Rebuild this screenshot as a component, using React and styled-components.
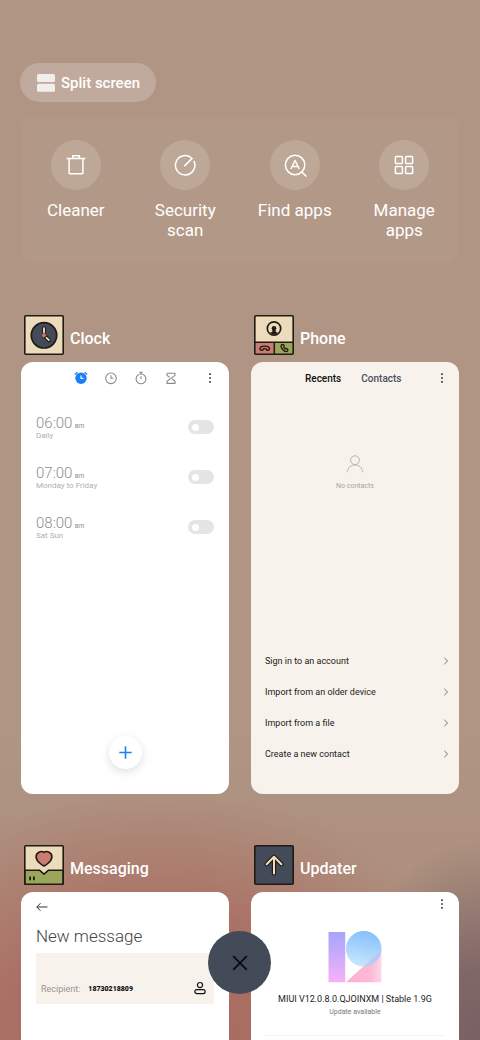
import React from "react";
import styled, { createGlobalStyle } from "styled-components";

const ALARMS = [
  { time: "06:00", days: "Daily" },
  { time: "07:00", days: "Monday to Friday" },
  { time: "08:00", days: "Sat Sun" },
];

const CONTACT_ACTIONS = [
  "Sign in to an account",
  "Import from an older device",
  "Import from a file",
  "Create a new contact",
];

const Dots = () => (
  <svg width="8" height="14" viewBox="0 0 8 14" fill="#111" aria-hidden="true">
    <rect x="3.2" y="2.3" width="1.6" height="1.6" rx="0.4" />
    <rect x="3.2" y="6.2" width="1.6" height="1.6" rx="0.4" />
    <rect x="3.2" y="10.1" width="1.6" height="1.6" rx="0.4" />
  </svg>
);

const TrashIcon = () => (
  <svg width="26" height="26" viewBox="0 0 26 26" fill="none" stroke="#fff" strokeWidth="1.5">
    <path d="M3.6 6.6h18.8M9.8 6.4V3.8h6.6v2.6M6.1 6.6v14.2c0 .6.3.9.9.9h12c.6 0 .9-.3.9-.9V6.6" />
  </svg>
);

const ScanIcon = () => (
  <svg width="26" height="26" viewBox="0 0 26 26" fill="none" stroke="#fff" strokeWidth="1.5" strokeLinecap="round">
    <path d="M12.8 13.6 20.1 6.4A9.7 9.7 0 1 0 22.1 9.4" />
  </svg>
);

const FindIcon = () => (
  <svg width="26" height="26" viewBox="0 0 26 26" fill="none" stroke="#fff" strokeWidth="1.5" strokeLinejoin="round">
    <circle cx="13.1" cy="13" r="9.7" />
    <path d="m19.2 19.3 5.2 5.2M8.9 17 13.1 8.5 17.3 17M10.5 14.6h5.2" />
  </svg>
);

const GridIcon = () => (
  <svg width="26" height="26" viewBox="0 0 26 26" fill="none" stroke="#fff" strokeWidth="1.5">
    <rect x="4.4" y="4.5" width="7" height="7" rx="0.8" />
    <rect x="14.6" y="4.5" width="7" height="7" rx="0.8" />
    <rect x="4.4" y="14.6" width="7" height="7" rx="0.8" />
    <rect x="14.6" y="14.6" width="7" height="7" rx="0.8" />
  </svg>
);

const SHORTCUTS = [
  { label: "Cleaner", icon: <TrashIcon /> },
  { label: "Security scan", icon: <ScanIcon /> },
  { label: "Find apps", icon: <FindIcon /> },
  { label: "Manage apps", icon: <GridIcon /> },
];

const ClockLogo = () => (
  <svg width="40" height="40" viewBox="0 0 40 40">
    <rect x="0.8" y="0.8" width="38.4" height="38.4" rx="1" fill="#ecdcbc" stroke="#211a15" strokeWidth="1.6" />
    <circle cx="20" cy="20.3" r="12.7" fill="#434b59" stroke="#211a15" strokeWidth="1.7" />
    <g strokeLinecap="round">
      <path d="M20 20V13.2M20 20.3 25 25.3" stroke="#211a15" strokeWidth="4" />
      <path d="M20 20V13.2M22.6 22.9 24.9 25.1" stroke="#ecdcbc" strokeWidth="1.9" />
    </g>
    <circle cx="20" cy="20.3" r="2.2" fill="#c97b74" stroke="#211a15" strokeWidth="0.4" />
  </svg>
);

const PhoneLogo = () => (
  <svg width="40" height="40" viewBox="0 0 40 40">
    <rect x="0.8" y="0.8" width="38.4" height="38.4" rx="1" fill="#ecdcbc" />
    <path d="M1 27.2h19.3V39H1z" fill="#c97b74" />
    <path d="M20.3 27.2H39V39H20.3z" fill="#9aa75b" />
    <path d="M1 27.2h38M20.3 27.2V39" stroke="#211a15" strokeWidth="1.5" />
    <rect x="0.8" y="0.8" width="38.4" height="38.4" rx="1" fill="none" stroke="#211a15" strokeWidth="1.6" />
    <circle cx="20" cy="13.5" r="6.7" fill="#ecdcbc" stroke="#211a15" strokeWidth="1.7" />
    <circle cx="20" cy="13.3" r="2.3" fill="#211a15" />
    <path d="M18.4 14.5h3.2l.1 2.2c1 .2 1.8.7 2.2 1.3a6.4 6.4 0 0 1-7.8 0c.4-.6 1.2-1.1 2.2-1.3z" fill="#211a15" />
    <path
      d="M6.2 34.7c-.8-1.6.2-3.6 4.5-3.6s5.3 2 4.5 3.6c-.4.7-2.6.7-2.9 0-.2-.6-.1-1-.6-1.1h-2c-.5.1-.4.5-.6 1.1-.3.7-2.5.7-2.9 0z"
      fill="#c97b74"
      stroke="#211a15"
      strokeWidth="1.4"
    />
    <path
      d="M6.2 34.7c-.8-1.6.2-3.6 4.5-3.6s5.3 2 4.5 3.6c-.4.7-2.6.7-2.9 0-.2-.6-.1-1-.6-1.1h-2c-.5.1-.4.5-.6 1.1-.3.7-2.5.7-2.9 0z"
      transform="translate(30 33.4) rotate(-132) scale(.9) translate(-10.7 -33)"
      fill="#9aa75b"
      stroke="#211a15"
      strokeWidth="1.5"
    />
  </svg>
);

const MessagingLogo = () => (
  <svg width="40" height="40" viewBox="0 0 40 40" stroke="#211a15" strokeWidth="1.6" strokeLinejoin="round">
    <rect x="0.8" y="0.8" width="38.4" height="38.4" rx="1" fill="#ecdcbc" />
    <path d="M1 25.2h14.4l4.6 4 4.6-4H39v14H1z" fill="#9aa75b" />
    <path
      d="M20 20.9c-1.1 0-7.9-4.6-7.9-9.2 0-4.5 5.2-6.2 7.9-4.3 2.7-1.9 7.9-.2 7.9 4.3 0 4.6-6.8 9.2-7.9 9.2z"
      fill="#c97b74"
    />
    <path d="M6.1 31.4v3.8M9.9 31.4v3.8" strokeWidth="1.8" />
  </svg>
);

const UpdaterLogo = () => (
  <svg width="40" height="40" viewBox="0 0 40 40" fill="none">
    <rect x="0.8" y="0.8" width="38.4" height="38.4" rx="1" fill="#434b59" stroke="#211a15" strokeWidth="1.6" />
    <g strokeLinecap="round" strokeLinejoin="round">
      <path d="M20 12.2v16.2M12.6 19.2 20 11.8l7.4 7.4" stroke="#211a15" strokeWidth="4.4" />
      <path d="M20 12.2v16.2M12.6 19.2 20 11.8l7.4 7.4" stroke="#f0dfc0" strokeWidth="2" />
    </g>
  </svg>
);

const AlarmIcon = () => (
  <svg width="14" height="14" viewBox="0 0 14 14">
    <circle cx="7" cy="7.3" r="5.7" fill="#1b80f5" />
    <path d="M.9 3.5 3.4 1.3M13.1 3.5l-2.5-2.2" stroke="#1b80f5" strokeWidth="1.4" />
    <path d="M7 4.5v2.9h2.4" fill="none" stroke="#fff" strokeWidth="1.1" />
  </svg>
);

const WorldClockIcon = () => (
  <svg width="14" height="14" viewBox="0 0 14 14" fill="none" stroke="#8b8b8b" strokeWidth="1.1">
    <circle cx="7" cy="7.3" r="5.3" />
    <path d="M7 4.3v3h2.4" />
  </svg>
);

const StopwatchIcon = () => (
  <svg width="14" height="14" viewBox="0 0 14 14" fill="none" stroke="#8b8b8b" strokeWidth="1.1">
    <circle cx="7" cy="7.9" r="4.9" />
    <path d="M7 5.2v3M5.2 1.2h3.6M7 1.2V3" />
  </svg>
);

const TimerIcon = () => (
  <svg width="14" height="14" viewBox="0 0 14 14" fill="none" stroke="#8b8b8b" strokeWidth="1.1" strokeLinejoin="round">
    <path d="M3 2.2h8v2.2L3 10.2v2.2h8v-2.2L8.2 8M3 2.2v2.2l2.6 1.9" />
  </svg>
);

const PersonIcon = () => (
  <svg width="18" height="18" viewBox="0 0 18 18" fill="none" stroke="#bab5af" strokeWidth="1">
    <circle cx="9" cy="5.2" r="4.4" />
    <path d="M1.2 17.2c.5-4.6 3.9-7.2 7.8-7.2s7.3 2.6 7.8 7.2" />
  </svg>
);

const ContactIcon = () => (
  <svg width="12" height="14" viewBox="0 0 12 14" fill="none" stroke="#111" strokeWidth="1.2">
    <circle cx="6" cy="4.1" r="2.6" />
    <rect x="0.9" y="8.6" width="10.2" height="4" rx="1.9" />
  </svg>
);

const VersionLogo = () => (
  <svg width="54" height="54" viewBox="0 0 54 54">
    <defs>
      <linearGradient id="bar" x1="0" y1="0" x2="0" y2="1">
        <stop offset="0" stopColor="#a5a5fb" />
        <stop offset="1" stopColor="#f9b0f8" />
      </linearGradient>
      <linearGradient id="ball" x1="0.6" y1="0" x2="0.4" y2="1">
        <stop offset="0" stopColor="#85c0fc" />
        <stop offset="1" stopColor="#c9e6fd" />
      </linearGradient>
      <linearGradient id="wedge" x1="0" y1="0" x2="1" y2="0">
        <stop offset="0" stopColor="#fdb2cf" />
        <stop offset="0.7" stopColor="#fcb9d5" />
        <stop offset="1" stopColor="#fbd9e8" />
      </linearGradient>
    </defs>
    <path d="M.5 2h16.7v50.3H.5z" fill="url(#bar)" />
    <path d="M17.9 52.3 53.5 20v32.3z" fill="url(#wedge)" />
    <circle cx="35.7" cy="18.8" r="17.8" fill="url(#ball)" />
    <path d="M35 36.8 53.2 20.5c-.8 9-8 16.3-18.2 16.3z" fill="#c3b9e6" opacity="0.55" />
  </svg>
);

const ClockApp = () => (
  <Card>
    <ClockBar>
      <IconButton aria-label="Alarm"><AlarmIcon /></IconButton>
      <IconButton aria-label="World clock"><WorldClockIcon /></IconButton>
      <IconButton aria-label="Stopwatch"><StopwatchIcon /></IconButton>
      <IconButton aria-label="Timer"><TimerIcon /></IconButton>
      <MenuButton aria-label="More options"><Dots /></MenuButton>
    </ClockBar>
    <AlarmList>
      {ALARMS.map(({ time, days }) => (
        <AlarmRow key={time}>
          <AlarmText>
            <Time>
              {time}
              <small>am</small>
            </Time>
            <Days>{days}</Days>
          </AlarmText>
          <Toggle type="checkbox" />
        </AlarmRow>
      ))}
    </AlarmList>
    <AddButton aria-label="Add alarm">
      <svg width="13" height="13" viewBox="0 0 13 13" stroke="#1b80f5" strokeWidth="1.6">
        <path d="M6.5.3v12.4M.3 6.5h12.4" />
      </svg>
    </AddButton>
  </Card>
);

const PhoneApp = () => (
  <Card $tone="#f7f2ec">
    <PhoneBar>
      <Tab $active>Recents</Tab>
      <Tab>Contacts</Tab>
      <MenuButton aria-label="More options"><Dots /></MenuButton>
    </PhoneBar>
    <Empty>
      <PersonIcon />
      <p>No contacts</p>
    </Empty>
    <Actions>
      {CONTACT_ACTIONS.map((label) => (
        <li key={label}>
          <ActionButton>
            {label}
            <svg width="6" height="8" viewBox="0 0 6 8" fill="none" stroke="#777" strokeWidth="1">
              <path d="m1.3.8 3.3 3.2-3.3 3.2" />
            </svg>
          </ActionButton>
        </li>
      ))}
    </Actions>
  </Card>
);

const MessagingApp = () => (
  <Card>
    <MessageBody>
      <IconButton aria-label="Back">
        <svg width="12" height="10" viewBox="0 0 12 10" fill="none" stroke="#333" strokeWidth="1">
          <path d="M11.5 5H.8M4.500 1.2.8 5l3.7 3.8" />
        </svg>
      </IconButton>
      <h3>New message</h3>
      <Recipient>
        <label htmlFor="recipient">Recipient:</label>
        <input id="recipient" type="text" defaultValue="18730218809" />
        <IconButton aria-label="Choose contact"><ContactIcon /></IconButton>
      </Recipient>
    </MessageBody>
  </Card>
);

const UpdaterApp = () => (
  <Card>
    <UpdaterBar>
      <MenuButton aria-label="More options"><Dots /></MenuButton>
    </UpdaterBar>
    <UpdaterBody>
      <VersionLogo />
      <Version>MIUI V12.0.8.0.QJOINXM | Stable 1.9G</Version>
      <Status>Update available</Status>
    </UpdaterBody>
    <Divider />
  </Card>
);

const APPS = [
  { name: "Clock", logo: <ClockLogo />, view: <ClockApp /> },
  { name: "Phone", logo: <PhoneLogo />, view: <PhoneApp /> },
  { name: "Messaging", logo: <MessagingLogo />, view: <MessagingApp /> },
  { name: "Updater", logo: <UpdaterLogo />, view: <UpdaterApp /> },
];

const App = () => {
  return (
    <>
      <GlobalStyle />
      <Screen>
        <SplitButton>
          <svg width="18" height="18" viewBox="0 0 18 18" fill="#fff" fillOpacity="0.8">
            <rect width="18" height="8" rx="1.5" />
            <rect y="9.7" width="18" height="8" rx="1.5" />
          </svg>
          Split screen
        </SplitButton>
        <Shortcuts>
          {SHORTCUTS.map(({ label, icon }) => (
            <Shortcut key={label}>
              <Bubble>{icon}</Bubble>
              <span>{label}</span>
            </Shortcut>
          ))}
        </Shortcuts>
        <Recents>
          {APPS.map(({ name, logo, view }) => (
            <Task key={name}>
              <TaskHeader>
                {logo}
                <h2>{name}</h2>
              </TaskHeader>
              {view}
            </Task>
          ))}
        </Recents>
        <CloseButton aria-label="Close all">
          <svg width="16" height="16" viewBox="0 0 16 16" stroke="#0b0b0b" strokeWidth="1.9">
            <path d="m1.2 1.2 13.6 13.6M14.8 1.2 1.2 14.8" />
          </svg>
        </CloseButton>
      </Screen>
    </>
  );
};

export default App;

const GlobalStyle = createGlobalStyle`
  * {
    box-sizing: border-box;
    margin: 0;
    padding: 0;
  }

  body {
    font-family: Roboto, "Liberation Sans", sans-serif;
    background-color: #b09585;
  }

  button,
  input {
    font-family: inherit;
    border: none;
    background: none;
  }

  button {
    cursor: pointer;
  }

  ul {
    list-style: none;
  }

  svg {
    display: block;
    flex-shrink: 0;
  }
`;

const Screen = styled.main`
  display: flex;
  flex-direction: column;
  align-items: flex-start;
  height: 100vh;
  overflow: hidden;
  padding: 63px 21px 0;
  background:
    radial-gradient(ellipse 140px 200px at 100% 100%, #786063 0%, rgba(120, 96, 99, 0.85) 35%, rgba(120, 96, 99, 0) 100%),
    radial-gradient(ellipse 330px 250px at 33% 100%, #aa6a60 0%, rgba(170, 106, 96, 0.85) 48%, rgba(170, 106, 96, 0) 100%),
    linear-gradient(#b09585 0%, #b09585 70%, #ae917f 80%);
`;

const SplitButton = styled.button`
  display: flex;
  flex-shrink: 0;
  align-items: center;
  gap: 6px;
  height: 39px;
  padding: 0 16px 0 17px;
  margin-left: -1px;
  border-radius: 20px;
  background-color: rgba(255, 255, 255, 0.2);
  color: #fff;
  font-size: 15px;
  font-weight: 500;
`;

const Shortcuts = styled.section`
  display: grid;
  flex-shrink: 0;
  grid-template-columns: repeat(4, 1fr);
  width: 100%;
  min-height: 146px;
  margin-top: 15px;
  padding-top: 23px;
  border-radius: 14px;
  background-color: rgba(192, 170, 145, 0.2);
`;

const Shortcut = styled.button`
  display: flex;
  flex-direction: column;
  align-items: center;
  gap: 10px;
  padding: 0 16px;
  color: #fff;
  font-size: 17px;
  line-height: 20px;

  span {
    width: min-content;
    min-width: 76px;
  }
`;

const Bubble = styled.div`
  display: flex;
  align-items: center;
  justify-content: center;
  width: 50px;
  height: 50px;
  border-radius: 50%;
  background-color: rgba(255, 255, 255, 0.15);
`;

const Recents = styled.section`
  display: grid;
  grid-template-columns: 1fr 1fr;
  gap: 51px 22px;
  width: 100%;
  margin-top: 52px;
`;

const Task = styled.article`
  min-width: 0;
`;

const TaskHeader = styled.header`
  display: flex;
  align-items: center;
  gap: 6px;
  padding-left: 3px;
  margin-bottom: 7px;

  h2 {
    padding-top: 8px;
    color: #fff;
    font-size: 16px;
    font-weight: 500;
    line-height: 20px;
  }
`;

const Card = styled.div`
  display: flex;
  flex-direction: column;
  aspect-ratio: 13 / 27;
  border-radius: 12px;
  background-color: ${(props) => props.$tone || "#fff"};
`;

const IconButton = styled.button`
  display: flex;
`;

const MenuButton = styled(IconButton)`
  margin-left: auto;
`;

const ClockBar = styled.div`
  display: flex;
  align-items: center;
  gap: 16px;
  height: 32px;
  padding: 0 15px 0 53px;
`;

const AlarmList = styled.div`
  padding: 8px 15px 0;
`;

const AlarmRow = styled.label`
  display: flex;
  align-items: center;
  justify-content: space-between;
  height: 50px;
`;

const AlarmText = styled.span`
  padding-top: 1px;
`;

const Time = styled.span`
  display: flex;
  align-items: baseline;
  gap: 2px;
  color: #8e8e8e;
  font-size: 15px;
  font-weight: 300;
  line-height: 16px;

  small {
    font-size: 7px;
    font-weight: 400;
    line-height: 8px;
  }
`;

const Days = styled.span`
  display: block;
  color: #b0b0b0;
  font-size: 8px;
  line-height: 10px;
`;

const Toggle = styled.input`
  appearance: none;
  display: flex;
  align-items: center;
  width: 26px;
  height: 14px;
  padding-left: 4px;
  border-radius: 7px;
  background-color: #e5e5e5;

  &::before {
    content: "";
    width: 7px;
    height: 7px;
    border-radius: 50%;
    background-color: #fff;
  }

  &:checked {
    background-color: #1b80f5;
  }
`;

const AddButton = styled.button`
  display: flex;
  align-items: center;
  justify-content: center;
  align-self: center;
  width: 33px;
  height: 33px;
  margin-top: auto;
  margin-bottom: 25px;
  border-radius: 50%;
  background-color: #fff;
  box-shadow: 0 3px 10px rgba(0, 0, 0, 0.13);
`;

const PhoneBar = styled.div`
  display: flex;
  align-items: center;
  gap: 20px;
  height: 32px;
  padding: 0 13px 0 54px;
`;

const Tab = styled.button`
  color: ${(props) => (props.$active ? "#111" : "#4a5060")};
  font-size: 10px;
  font-weight: 500;
`;

const Empty = styled.div`
  display: flex;
  flex-direction: column;
  align-items: center;
  gap: 8px;
  margin-top: 61px;
  color: #aaa5a0;
  font-size: 7px;
  line-height: 10px;
`;

const Actions = styled.ul`
  margin-top: auto;
  padding: 0 10px 25px 14px;
`;

const ActionButton = styled.button`
  display: flex;
  align-items: center;
  justify-content: space-between;
  width: 100%;
  height: 31px;
  color: #1c1b1a;
  font-size: 9px;
`;

const MessageBody = styled.div`
  padding: 10px 15px;

  h3 {
    margin-top: 13px;
    color: #444;
    font-size: 17px;
    font-weight: 300;
    line-height: 22px;
  }
`;

const Recipient = styled.div`
  display: flex;
  align-items: flex-end;
  height: 51px;
  margin-top: 6px;
  padding: 0 8px 9px 5px;
  gap: 8px;
  background-color: #f7f2ec;

  label {
    color: #9c958d;
    font-size: 9px;
    line-height: 12px;
  }

  input {
    flex: 1;
    min-width: 0;
    color: #111;
    font-size: 7px;
    font-weight: 900;
    line-height: 12px;
  }
`;

const UpdaterBar = styled.div`
  display: flex;
  align-items: center;
  height: 24px;
  padding-right: 13px;
`;

const UpdaterBody = styled.div`
  display: flex;
  flex-direction: column;
  align-items: center;
  padding-top: 14px;
`;

const Version = styled.p`
  margin-top: 9px;
  color: #222;
  font-size: 9px;
  line-height: 12px;
`;

const Status = styled.p`
  margin-top: 2px;
  color: #777;
  font-size: 7px;
  line-height: 10px;
`;

const Divider = styled.hr`
  margin: 18px 14px 0;
  border: none;
  border-top: 1px solid #f4f4f4;
`;

const CloseButton = styled.button`
  position: fixed;
  bottom: 46px;
  left: 50%;
  display: flex;
  align-items: center;
  justify-content: center;
  width: 63px;
  height: 63px;
  margin-left: -32px;
  border-radius: 50%;
  background-color: #434b59;
`;
